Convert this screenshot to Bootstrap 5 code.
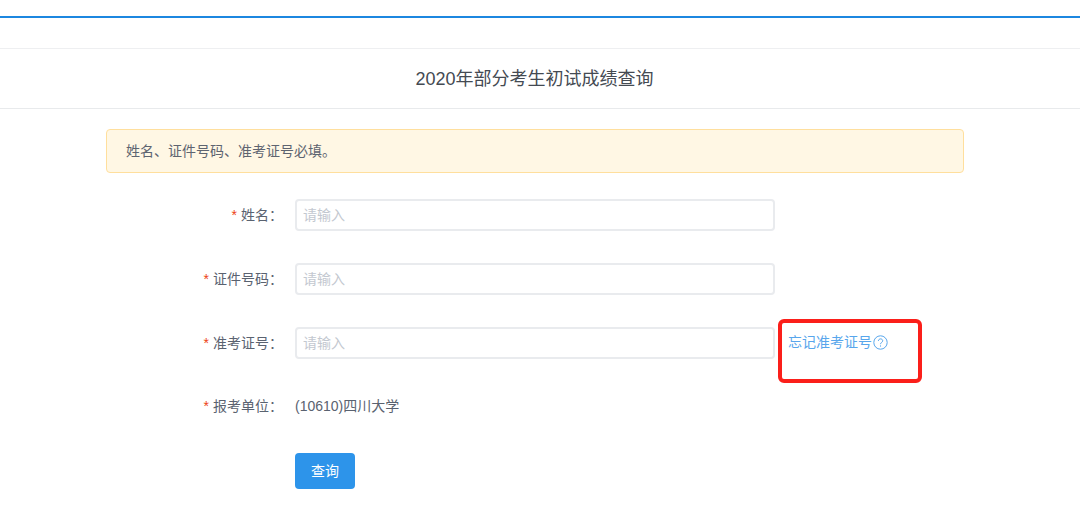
<!DOCTYPE html>
<html lang="zh-CN">
<head>
<meta charset="utf-8">
<title>2020年部分考生初试成绩查询</title>
<link rel="stylesheet" href="https://cdn.jsdelivr.net/npm/bootstrap@5.3.0/dist/css/bootstrap.min.css">
<style>
html, body { height: 531px; overflow: hidden; }
body { background: #fff; color: #515a6e; font-family: "Liberation Sans", "Noto Sans CJK SC", sans-serif; font-size: 14px; }
.top-rule { margin-top: 16px; height: 2px; background: #1c87e0; }
.top-gap { height: 31px; border-bottom: 1px solid #eeeff1; }
.page-head { height: 60px; border-bottom: 1px solid #e8eaec; font-size: 18px; color: #444a52; font-weight: 400; margin: 0; padding: 2px 11px 0 0; }
.form-wrap { width: 858px; margin-left: 106px; margin-top: 20px; position: relative; }
.note-box { height: 44px; background: #fff7e4; border: 1px solid #ffdf9d; border-radius: 4px; padding-left: 19px; margin-bottom: 26px; color: #5e6470; }
.form-line { height: 32px; margin-bottom: 32px; }
.form-line.last-line { margin-top: -1px; margin-bottom: 31px; }
.field-label { width: 189px; padding-right: 12px; flex: none; text-align: right; color: #5a6270; }
.req { color: #ed3f14; margin-right: 4px; font-family: "Liberation Sans", sans-serif; }
.field-input { width: 480px; flex: none; height: 32px; border: 2px solid #e9ebee; border-radius: 4px; padding: 0 6px; font-size: 14px; color: #515a6e; box-shadow: none; }
.field-input::placeholder { color: #c3c8d0; opacity: 1; }
.forgot { color: #58a6ec; text-decoration: none; margin-left: 13px; margin-top: -1px; }
.forgot svg { vertical-align: -3px; margin-left: 1px; }
.unit-text { color: #5a6270; }
.submit-btn { width: 60px; height: 36px; margin-left: 189px; padding: 0; background: #2d94ea; border: 0; border-radius: 4px; color: #fff; font-size: 14px; }
.mark-frame { position: absolute; left: 672px; top: 190px; width: 144px; height: 64px; border: 4px solid #fb1f1a; border-radius: 6px; }
</style>
</head>
<body>
<div class="top-rule"></div>
<div class="top-gap"></div>
<h1 class="page-head d-flex align-items-center justify-content-center">2020年部分考生初试成绩查询</h1>
<div class="form-wrap">
  <div class="note-box d-flex align-items-center">姓名、证件号码、准考证号必填。</div>
  <form>
    <div class="form-line d-flex align-items-center">
      <label class="field-label" for="f1"><span class="req">*</span>姓名：</label>
      <input id="f1" class="form-control field-input" type="text" placeholder="请输入">
    </div>
    <div class="form-line d-flex align-items-center">
      <label class="field-label" for="f2"><span class="req">*</span>证件号码：</label>
      <input id="f2" class="form-control field-input" type="text" placeholder="请输入">
    </div>
    <div class="form-line d-flex align-items-center">
      <label class="field-label" for="f3"><span class="req">*</span>准考证号：</label>
      <input id="f3" class="form-control field-input" type="text" placeholder="请输入">
      <a class="forgot" href="#">忘记准考证号<svg width="15" height="15" viewBox="0 0 15 15" fill="none" stroke="#58a6ec" stroke-width="1"><circle cx="7.5" cy="7.5" r="6.7"/><path d="M5.4 6c0-1.3 1-2.1 2.2-2.1 1.2 0 2.1.8 2.1 1.9 0 1.7-2.2 1.6-2.2 3.4"/><path d="M7.5 10.4v1.2"/></svg></a>
    </div>
    <div class="form-line last-line d-flex align-items-center">
      <span class="field-label"><span class="req">*</span>报考单位：</span>
      <span class="unit-text">(10610)四川大学</span>
    </div>
    <button type="button" class="btn submit-btn">查询</button>
  </form>
  <div class="mark-frame"></div>
</div>
<script src="https://cdn.jsdelivr.net/npm/bootstrap@5.3.0/dist/js/bootstrap.bundle.min.js"></script>
</body>
</html>
